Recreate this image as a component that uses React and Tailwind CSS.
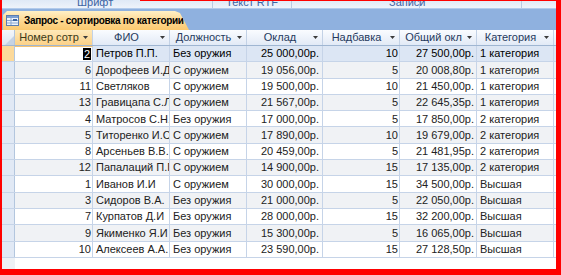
import React from "react";

const rows = [
    ["2", "Петров П.П.", "Без оружия", "25 000,00р.", "10", "27 500,00р.", "1 категория"],
    ["6", "Дорофеев И.Д", "С оружием", "19 056,00р.", "5", "20 008,80р.", "1 категория"],
    ["11", "Светляков", "С оружием", "19 500,00р.", "10", "21 450,00р.", "1 категория"],
    ["13", "Гравицапа С.Л", "С оружием", "21 567,00р.", "5", "22 645,35р.", "1 категория"],
    ["4", "Матросов С.Н.", "Без оружия", "17 000,00р.", "5", "17 850,00р.", "2 категория"],
    ["5", "Титоренко И.С", "С оружием", "17 890,00р.", "10", "19 679,00р.", "2 категория"],
    ["8", "Арсеньев В.В.", "С оружием", "20 459,00р.", "5", "21 481,95р.", "2 категория"],
    ["12", "Папалаций П.П", "С оружием", "14 900,00р.", "15", "17 135,00р.", "2 категория"],
    ["1", "Иванов И.И", "С оружием", "30 000,00р.", "15", "34 500,00р.", "Высшая"],
    ["3", "Сидоров В.А.", "Без оружия", "21 000,00р.", "5", "22 050,00р.", "Высшая"],
    ["7", "Курпатов Д.И", "Без оружия", "28 000,00р.", "15", "32 200,00р.", "Высшая"],
    ["9", "Якименко Я.И", "Без оружия", "15 300,00р.", "5", "16 065,00р.", "Высшая"],
    ["10", "Алексеев А.А.", "Без оружия", "23 590,00р.", "15", "27 128,50р.", "Высшая"],
];

const headers = ["Номер сотр", "ФИО", "Должность", "Оклад", "Надбавка", "Общий окл", "Категория"];

// widths of the 7 data columns
const widths = ["w-[78px]", "w-[77px]", "w-[77px]", "w-[76px]", "w-[77px]", "w-[77px]", "w-[77px]"];
const aligns = ["justify-end pr-[1px]", "justify-start pl-[3px]", "justify-start pl-[3px]", "justify-end pr-[3px]", "justify-end pr-[1px]", "justify-end pr-[2px]", "justify-start pl-[3px]"];

function Arrow() {
    return (
        <svg width="5" height="3" viewBox="0 0 5 3" className="shrink-0">
            <path d="M0 0h5L2.5 3z" fill="#3b3b3b" />
        </svg>
    );
}

function QueryIcon() {
    return (
        <svg width="13" height="11" viewBox="0 0 13 11" className="shrink-0">
            <rect x="0.5" y="0.5" width="12" height="10" fill="#eef3fa" stroke="#5a7db0" />
            <rect x="1" y="1" width="11" height="2" fill="#7b9fd2" />
            <path d="M1 5.5h11M1 8h11M5 3v7" stroke="#8aa6cf" strokeWidth="1" />
            <rect x="7" y="4" width="4" height="2" fill="#3c64a0" />
        </svg>
    );
}

export default function App() {
    return (
        <div className="w-[561px] h-[275px] bg-white border-l-2 border-r-[5px] border-b-[6px] border-[#ff0000] flex flex-col overflow-hidden font-['Liberation_Sans',sans-serif] text-[11px]">
            {/* ribbon group labels, cut off at the top */}
            <div className="h-[8px] shrink-0 relative overflow-hidden bg-gradient-to-b from-[#dfe9f6] to-[#eef3fa] flex text-[11px] text-[#3d64a3] leading-none">
                <div className="w-[211px] border-r border-[#b9cbe4] flex justify-start pl-[75px]">
                    <span className="-mt-[3px]">Шрифт</span>
                </div>
                <div className="w-[79px] border-r border-[#b9cbe4] flex justify-center">
                    <span className="-mt-[3px]">Текст RTF</span>
                </div>
                <div className="w-[128px] border-r border-[#b9cbe4] flex justify-start pl-[97px]">
                    <span className="-mt-[3px]">Записи</span>
                </div>
                <div className="w-[102px] border-r border-[#b9cbe4]"></div>
                <div className="absolute top-0 left-[138px] right-0 h-[1px] bg-[#ff0000]"></div>
            </div>

            {/* object tab bar */}
            <div className="h-[22px] shrink-0 bg-[#8fb1df] border-t border-[#b3cbeb] flex items-end pl-[1px]">
                <div className="h-[19px] w-[186px] bg-gradient-to-b from-[#fff0c6] via-[#fdd993] to-[#fbc96f] [clip-path:polygon(0_4px,4px_0,172px_0,177px_2px,186px_100%,0_100%)] flex items-center pl-[3px] gap-[5px]">
                    <QueryIcon />
                    <span className="font-bold text-[10px] text-black whitespace-nowrap tracking-[-0.3px]">Запрос - сортировка по категории</span>
                </div>
            </div>

            {/* header row */}
            <div className="h-[16px] shrink-0 flex border-b border-[#9fb6d2] bg-gradient-to-b from-[#fafcff] to-[#e2eaf6]">
                <div className="w-[13px] shrink-0 border-r border-[#b3c6de] bg-gradient-to-b from-[#f4f7fb] to-[#dde6f2] flex items-end justify-end">
                    <svg width="9" height="9" viewBox="0 0 9 9">
                        <path d="M9 0V9H0z" fill="#c5d2e4" />
                    </svg>
                </div>
                {headers.map((h, i) => (
                    <div
                        key={h}
                        className={`${widths[i]} shrink-0 flex items-center border-r border-[#c3d2e6] pr-[4px] ${i === 0 ? "bg-gradient-to-b from-[#fee9b9] to-[#fbd188] text-[#3a3a1a]" : "text-[#253a5e]"}`}
                    >
                        <span className="flex-1 overflow-hidden whitespace-nowrap text-center">{h}</span>
                        <Arrow />
                    </div>
                ))}
            </div>

            {/* records */}
            {rows.map((r, ri) => {
                const current = ri === 0;
                const rowBg = current ? "bg-[#dce6f4]" : ri % 2 === 1 ? "bg-[#f0f2f5]" : "bg-white";
                return (
                    <div key={r[0]} className={`h-[16.3px] shrink-0 flex border-b border-[#c6d4e8] ${rowBg}`}>
                        <div className={`w-[13px] shrink-0 border-r border-[#b3c6de] ${current ? "bg-[#fcd99a]" : "bg-[#e1e9f5]"}`}></div>
                        {r.map((v, ci) => (
                            <div
                                key={ci}
                                className={`${widths[ci]} shrink-0 flex items-center overflow-hidden whitespace-nowrap border-r border-[#c6d4e8] ${aligns[ci]} ${current ? "text-black" : "text-[#222]"} ${current && ci === 0 ? "bg-white border-t border-t-[#f3c273]" : ""}`}
                            >
                                {current && ci === 0 ? (
                                    <span className="bg-black text-white px-[1px] leading-[12px]">{v}</span>
                                ) : (
                                    v
                                )}
                            </div>
                        ))}
                    </div>
                );
            })}

            {/* empty space under the records */}
            <div className="flex-1 flex">
                <div className="w-[13px] bg-[#eef1f5]"></div>
                <div className="flex-1 bg-white"></div>
            </div>
        </div>
    );
}
